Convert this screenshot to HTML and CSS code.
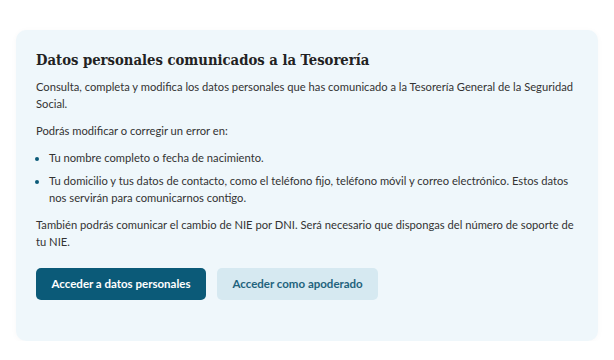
FILE: index.html
```html
<!DOCTYPE html>
<html lang="es">
<head>
  <meta charset="UTF-8" />
  <title>Datos personales comunicados a la Tesorería</title>
  <link rel="stylesheet" href="styles.css">
</head>
<body>
  <div class="card">
    <h2>Datos personales comunicados a la Tesorería</h2>
    <p>Consulta, completa y modifica los datos personales que has comunicado a la Tesorería General de la Seguridad Social.</p>
    <p>Podrás modificar o corregir un error en:</p>
    <ul>
      <li>Tu nombre completo o fecha de nacimiento.</li>
      <li>Tu domicilio y tus datos de contacto, como el teléfono fijo, teléfono móvil y correo electrónico. Estos datos nos servirán para comunicarnos contigo.</li>
    </ul>
    <p>También podrás comunicar el cambio de NIE por DNI. Será necesario que dispongas del número de soporte de tu NIE.</p>
    <div class="actions">
      <a href="#" class="btn btn-primary">Acceder a datos personales</a>
      <a href="#" class="btn btn-secondary">Acceder como apoderado</a>
    </div>
  </div>
</body>
</html>
```

FILE: styles.css
```css
body {
  margin: 0;
  padding: 30px 16px 0 16px;
  font-family: Lato, "Open Sans", sans-serif;
  background-color: #fff;
  color: #333;
}
.card {
  background-color: #eff7fb;
  border-radius: 10px;
  padding: 20px 20px 41px 20px;
  box-shadow: 0 1px 6px rgba(0,0,0,0.03);
}
h2 {
  font-family: "DejaVu Serif", serif;
  font-stretch: condensed;
  font-weight: bold;
  font-size: 14.7px;
  color: #222;
  margin: 0 0 8px 0;
  line-height: 20px;
}
p {
  font-size: 11.2px;
  line-height: 17px;
  margin: 0 0 10px 0;
}
ul {
  margin: 0 0 10px 0;
  padding: 0 0 0 13px;
  font-size: 11.2px;
  line-height: 17px;
}
li {
  margin-bottom: 6px;
}
li::marker {
  color: #0b5a78;
}
.actions {
  display: flex;
  gap: 11px;
  margin-top: 18px;
}
.btn {
  display: inline-block;
  height: 32px;
  line-height: 32px;
  padding: 0 15.5px;
  border-radius: 5px;
  font-size: 11.5px;
  font-weight: bold;
  text-decoration: none;
}
.btn-primary {
  background-color: #0b5a78;
  color: #fff;
}
.btn-secondary {
  background-color: #d6e9f1;
  color: #1f637d;
}
```
